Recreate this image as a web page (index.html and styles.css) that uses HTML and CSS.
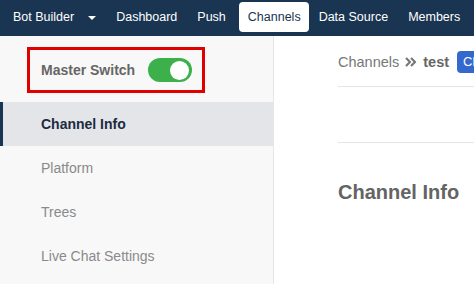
FILE: index.html
```html
<!DOCTYPE html>
<html lang="en">
<head>
  <meta charset="UTF-8" />
  <title>Channels - Bot Builder</title>
  <link rel="stylesheet" href="styles.css">
</head>
<body>
  <nav class="topnav">
    <a class="nav-item brand">Bot Builder <span class="caret"></span></a>
    <a class="nav-item">Dashboard</a>
    <a class="nav-item">Push</a>
    <a class="nav-item active">Channels</a>
    <a class="nav-item">Data Source</a>
    <a class="nav-item">Members</a>
  </nav>

  <div class="layout">
    <aside class="sidebar">
      <div class="master">
        <span>Master Switch</span>
        <span class="toggle on"><span class="knob"></span></span>
      </div>
      <ul class="side-menu">
        <li class="active">Channel Info</li>
        <li>Platform</li>
        <li>Trees</li>
        <li>Live Chat Settings</li>
      </ul>
    </aside>

    <main class="content">
      <div class="crumbs">
        <span class="crumb">Channels</span>
        <svg class="sep" width="11" height="10" viewBox="0 0 11 10">
          <path d="M1 1l4 4-4 4M6 1l4 4-4 4" fill="none" stroke="#777" stroke-width="2.2" stroke-linejoin="round"/>
        </svg>
        <span class="crumb current">test</span>
        <span class="badge">Channel ID</span>
      </div>
      <div class="toolbar"></div>
      <h2>Channel Info</h2>
    </main>
  </div>
</body>
</html>
```

FILE: styles.css
```css
:root {
  --navy: #1a3551;
  --green: #3bb04b;
  --blue: #3468cc;
  font-family: "Liberation Sans", Arial, sans-serif;
}

* {
  box-sizing: border-box;
  margin: 0;
  padding: 0;
}

body {
  height: 100vh;
  overflow: hidden;
  display: flex;
  flex-direction: column;
  background: #fff;
  color: #333;
}

.topnav {
  height: 36px;
  background: var(--navy);
  display: flex;
  align-items: flex-start;
  padding-left: 3px;
  white-space: nowrap;
}

.nav-item {
  flex-shrink: 0;
  color: #fff;
  font-size: 12.5px;
  padding: 0 10px;
  height: 30px;
  line-height: 30px;
  margin-top: 2px;
  border-radius: 4px;
}

.nav-item.brand {
  display: flex;
  align-items: center;
  gap: 14px;
}

.caret {
  width: 0;
  height: 0;
  border-left: 4px solid transparent;
  border-right: 4px solid transparent;
  border-top: 4px solid #fff;
  margin-top: 1px;
}

.nav-item.active {
  background: #fff;
  color: var(--navy);
  padding: 0 8px 0 9px;
  margin-left: 3px;
}

.layout {
  flex: 1;
  display: flex;
}

.sidebar {
  width: 274px;
  flex-shrink: 0;
  background: #f8f8f8;
  border-right: 1px solid #e6e6e6;
  padding-top: 11px;
}

.master {
  margin-left: 27px;
  width: 178px;
  height: 46px;
  border: 3px solid #e00000;
  display: flex;
  align-items: center;
  gap: 13px;
  padding-left: 11px;
  font-size: 14px;
  font-weight: 700;
  color: #666;
}

.toggle {
  width: 44px;
  height: 24px;
  border-radius: 12px;
  background: #ccc;
  display: flex;
  align-items: center;
  padding: 0 3px;
}

.toggle.on {
  background: var(--green);
  justify-content: flex-end;
}

.knob {
  width: 19px;
  height: 19px;
  border-radius: 50%;
  background: #fff;
}

.side-menu {
  list-style: none;
  margin-top: 9px;
}

.side-menu li {
  height: 44px;
  line-height: 44px;
  padding-left: 41px;
  font-size: 14px;
  color: #8a8a8a;
}

.side-menu li.active {
  background: #e4e5e9;
  border-left: 3px solid var(--navy);
  padding-left: 38px;
  font-weight: 700;
  color: #1c2b40;
}

.content {
  flex: 1;
  min-width: 0;
  padding-left: 64px;
  padding-top: 15px;
  white-space: nowrap;
  overflow: hidden;
}

.crumbs {
  display: flex;
  align-items: center;
  height: 22px;
  color: #777;
  margin-bottom: 13px;
}

.crumbs > * {
  flex-shrink: 0;
}

.crumbs + .toolbar {
  border-top: 1px solid #e5e5e5;
}

.crumb {
  font-size: 14.5px;
}

.sep {
  margin: 0 7px 0 6px;
}

.crumb.current {
  font-weight: 700;
  color: #666;
}

.badge {
  margin-left: 8px;
  height: 22px;
  line-height: 22px;
  padding: 0 6px;
  border-radius: 4px;
  background: var(--blue);
  color: #fff;
  font-size: 13px;
}

.toolbar {
  height: 57px;
  border-bottom: 1px solid #e5e5e5;
}

h2 {
  margin-top: 37px;
  font-size: 20px;
  line-height: 24px;
  color: #646464;
}
```
